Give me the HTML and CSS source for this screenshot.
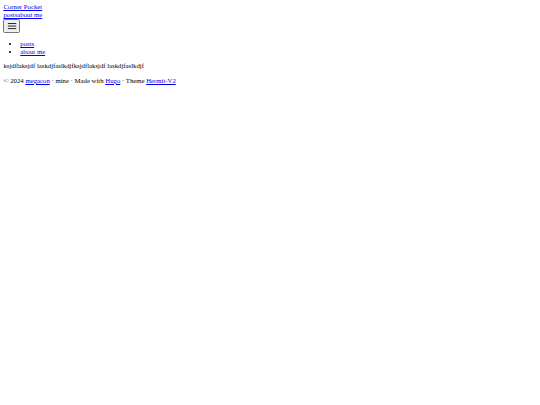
FILE: index.html
```html
<!DOCTYPE html>
<html lang="en">
<head>
<meta charset="utf-8">
<title>Corner Pocket</title>
<link rel="stylesheet" href="styles.css">
</head>
<body class="page">
<header class="site-header">
  <a class="site-title" href="#">Corner Pocket</a>
  <nav class="site-nav"><a href="#">posts</a><a href="#">about me</a></nav>
  <button class="menu-btn" type="button" aria-label="menu">
    <svg class="menu-icon" viewBox="0 0 24 24" fill="none" stroke="#000" stroke-width="2" stroke-linecap="round" stroke-linejoin="round"><line x1="3" y1="6" x2="21" y2="6"/><line x1="3" y1="12" x2="21" y2="12"/><line x1="3" y1="18" x2="21" y2="18"/></svg>
  </button>
</header>
<ul class="menu-list">
  <li><a href="#">posts</a></li>
  <li><a href="#">about me</a></li>
</ul>
<main class="content">
  <p class="para">ksjdflaksjdf laskdjfaslkdjfksjdflaksjdf laskdjfaslkdjf</p>
</main>
<footer class="site-footer">
  <span>© 2024 <a href="#">megacon</a> · mine · Made with <a href="#">Hugo</a> · Theme <a href="#">Hermit-V2</a></span>
</footer>
</body>
</html>
```
FILE: styles.css
```css
html { background: #fff; }
.page {
  margin: 3.375px;
  font-family: "Liberation Serif", "Times New Roman", serif;
  font-size: 6.75px;
  line-height: 7.76px;
  color: #000;
}
a { color: #0000ee; }
.site-title { display: block; }
.site-nav { display: block; }
.menu-btn {
  display: flex;
  align-items: center;
  justify-content: center;
  box-sizing: border-box;
  width: 17px;
  height: 14.5px;
  margin: 0;
  padding: 0;
  border: 1px solid #767676;
  border-radius: 1.5px;
  background: #efefef;
}
.menu-icon { display: block; width: 10.125px; height: 10.125px; }
.menu-list {
  margin: 6.75px 0;
  padding-left: 16.875px;
}
.para { margin: 6.75px 0; }
.site-footer { display: block; }
```
